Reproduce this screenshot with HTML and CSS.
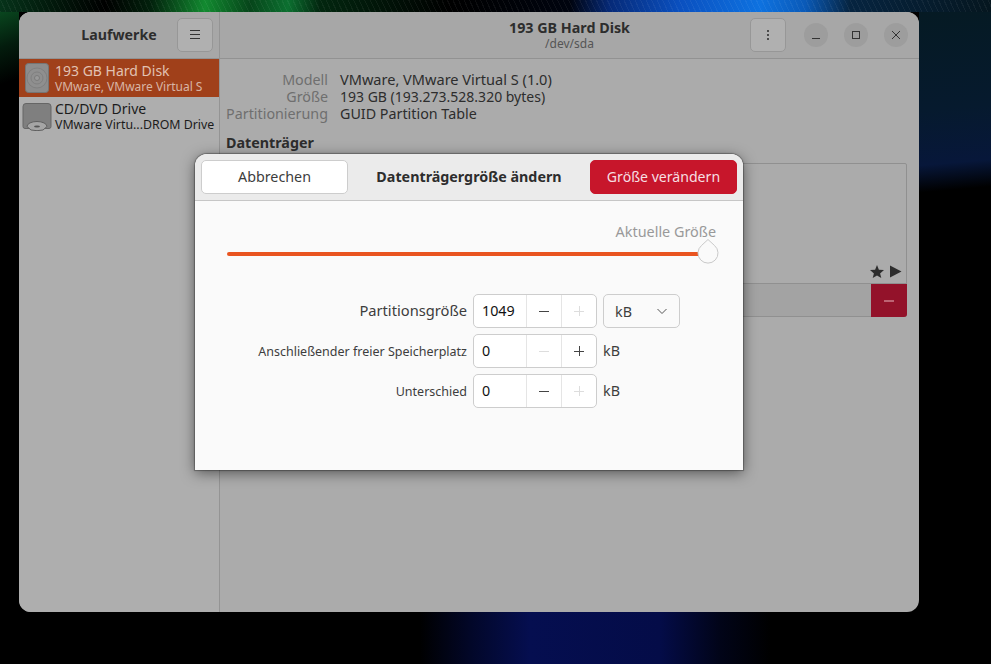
FILE: index.html
```html
<!DOCTYPE html>
<html lang="de">
<head>
    <meta charset="UTF-8">
    <title>Laufwerke</title>
    <link rel="stylesheet" href="styles.css">
</head>
<body>

<div class="window">

    <div class="sidebar">
        <div class="sidehead">
            <span></span>
            <b>Laufwerke</b>
            <button class="headbtn">
                <svg width="12" height="12" viewBox="0 0 12 12"><path d="M1 1.500h10M1 5.500h10M1 9.500h10" stroke="#333" fill="none"/></svg>
            </button>
        </div>

        <div class="drive selected">
            <svg class="driveicon" width="30" height="30" viewBox="0 0 30 30">
                <rect x="3.500" y="0.500" width="23" height="29" rx="3" fill="#8c8c8c" stroke="#757575"/>
                <circle cx="15" cy="15" r="10" fill="#8f8f8f" stroke="#808080"/>
                <circle cx="15" cy="15" r="6" fill="none" stroke="#808080"/>
                <circle cx="15" cy="15" r="2.500" fill="#999" stroke="#7b7b7b"/>
            </svg>
            <div>
                <p class="drivename">193 GB Hard Disk</p>
                <p class="drivesub">VMware, VMware Virtual S</p>
            </div>
        </div>

        <div class="drive">
            <svg class="driveicon" width="30" height="30" viewBox="0 0 30 30">
                <path d="M4 2.500h22a3 3 0 0 1 3 3v20a2 2 0 0 1-2 2h-24a2 2 0 0 1-2-2v-20a3 3 0 0 1 3-3z" fill="#7f7f7f" stroke="#666"/>
                <path d="M5 25.500a10 5 0 0 1 20 0l-4 3.500a10 3 0 0 1-12 0z" fill="#a5a5a5" stroke="#5f5f5f"/>
                <ellipse cx="15" cy="25.500" rx="3" ry="1" fill="#555"/>
            </svg>
            <div>
                <p class="drivename dark">CD/DVD Drive</p>
                <p class="drivesub dark wide">VMware Virtu...DROM Drive</p>
            </div>
        </div>
    </div>

    <div class="main">
        <div class="mainhead">
            <span></span>
            <div class="title">
                <b>193 GB Hard Disk</b>
                <small>/dev/sda</small>
            </div>
            <div class="controls">
                <button class="headbtn kebab">
                    <svg width="12" height="12" viewBox="0 0 12 12"><path d="M6 1v2M6 5v2M6 9v2" stroke="#333" stroke-width="1.600" fill="none"/></svg>
                </button>
                <span class="wbtn"><svg width="12" height="12" viewBox="0 0 12 12"><path d="M2 9.500h8" stroke="#333" fill="none"/></svg></span>
                <span class="wbtn"><svg width="12" height="12" viewBox="0 0 12 12"><rect x="2.500" y="2.500" width="7" height="7" stroke="#333" fill="none"/></svg></span>
                <span class="wbtn"><svg width="12" height="12" viewBox="0 0 12 12"><path d="M2 2l8 8M10 2l-8 8" stroke="#333" fill="none"/></svg></span>
            </div>
        </div>

        <div class="content">
            <div class="info">
                <span class="lbl">Modell</span><span class="model">VMware, VMware Virtual S (1.0)</span>
                <span class="lbl">Größe</span><span class="bytes">193 GB (193.273.528.320 bytes)</span>
                <span class="lbl">Partitionierung</span><span>GUID Partition Table</span>
            </div>
            <h2>Datenträger</h2>
            <div class="volumes">
                <div class="volmap">
                    <svg width="32" height="13" viewBox="0 0 32 13">
                        <path d="M7 0l1.900 4.700 5.100.4-3.900 3.300 1.200 4.600-4.300-2.600-4.300 2.600 1.200-4.600-3.900-3.300 5.100-.4z" fill="#2d2d2d"/>
                        <path d="M20 0.500l11.500 6-11.500 6z" fill="#2d2d2d"/>
                    </svg>
                </div>
                <div class="voltools">
                    <button class="delete"><svg width="10" height="2" viewBox="0 0 10 2"><path d="M0 1h10" stroke="#e8b4bc"/></svg></button>
                </div>
            </div>
        </div>
    </div>

    <div class="dialog">
        <div class="dialoghead">
            <button class="dbtn">Abbrechen</button>
            <b>Datenträgergröße ändern</b>
            <button class="dbtn red">Größe verändern</button>
        </div>
        <div class="dialogbody">
            <div class="slider">
                <span class="marker">Aktuelle Größe</span>
                <div class="track">
                    <svg class="thumb" width="24" height="28" viewBox="0 0 24 28">
                        <path d="M12 2.500l6.500 6a10 10 0 1 1-13 0z" fill="#fafafa" stroke="#c9c9c9"/>
                    </svg>
                </div>
            </div>

            <div class="form">
                <label class="big">Partitionsgröße</label>
                <div class="spin">
                    <span class="val">1049</span>
                    <span class="step"><svg width="12" height="12" viewBox="0 0 12 12"><path d="M1 6.500h10" stroke="#444"/></svg></span>
                    <span class="step"><svg width="12" height="12" viewBox="0 0 12 12"><path d="M1 6.500h10M6.500 1v10" stroke="#ddd"/></svg></span>
                </div>
                <div class="combo">
                    <span>kB</span>
                    <svg width="12" height="12" viewBox="0 0 12 12"><path d="M1.500 4l4.500 4.500 4.500-4.500" stroke="#555" fill="none"/></svg>
                </div>

                <label>Anschließender freier Speicherplatz</label>
                <div class="spin">
                    <span class="val">0</span>
                    <span class="step"><svg width="12" height="12" viewBox="0 0 12 12"><path d="M1 6.500h10" stroke="#ddd"/></svg></span>
                    <span class="step"><svg width="12" height="12" viewBox="0 0 12 12"><path d="M1 6.500h10M6.500 1v10" stroke="#444"/></svg></span>
                </div>
                <span class="unit">kB</span>

                <label>Unterschied</label>
                <div class="spin">
                    <span class="val">0</span>
                    <span class="step"><svg width="12" height="12" viewBox="0 0 12 12"><path d="M1 6.500h10" stroke="#444"/></svg></span>
                    <span class="step"><svg width="12" height="12" viewBox="0 0 12 12"><path d="M1 6.500h10M6.500 1v10" stroke="#ddd"/></svg></span>
                </div>
                <span class="unit">kB</span>
            </div>
        </div>
    </div>

</div>

</body>
</html>
```

FILE: styles.css
```css
html, body {
    height: 100%;
}

/* wallpaper: only the strips around the window can be seen */
body {
    margin: 0;
    padding: 12px 72px 52px 19px;
    box-sizing: border-box;
    overflow: hidden;
    font-family: "Noto Sans", sans-serif;
    font-size: 14.3px;
    color: #2d2d2d;
    background-color: #000;
    background-image:
        repeating-linear-gradient(65deg, rgba(255,255,255,0.05) 0 1px, rgba(0,0,0,0) 1px 5px),
        linear-gradient(to right, #06331a 0, #021a0c 50px, #000 105px, #02200c 150px, #128a30 205px, #06451a 250px, #0c7030 288px, #02260f 320px, #000 450px, #00040f 570px, #062a78 610px, #0a50c0 680px, #0e72e0 760px, #0a5ab8 805px, #062440 850px, #05161f 991px),
        linear-gradient(175deg, #051a22 0, #061a2e 110px, #07173a 165px, #000 192px),
        linear-gradient(160deg, #0b5424 0, #031c0d 45px, #000 80px),
        linear-gradient(to right, #000 420px, #020728 470px, #050e50 530px, #040c48 660px, #010418 720px, #000 770px);
    background-size: 100% 12px, 100% 12px, 72px 210px, 19px 90px, 100% 52px;
    background-position: 0 0, 0 0, 100% 0, 0 0, 0 100%;
    background-repeat: no-repeat;
}

p {
    margin: 0;
}

button {
    font: inherit;
    padding: 0;
}

.window {
    position: relative;
    display: grid;
    grid-template-columns: 201px 1fr;
    height: 600px;
    border-radius: 12px;
    overflow: hidden;
    background: #ababab;
}

/* sidebar */
.sidebar {
    background: #aeaeae;
    border-right: 1px solid #949494;
}

.sidehead {
    display: grid;
    grid-template-columns: 36px 1fr 36px;
    align-items: center;
    height: 46px;
    padding: 0 6px;
    border-bottom: 1px solid #929292;
    background: #a7a7a7;
    text-align: center;
}

.sidehead b {
    padding-bottom: 2px;
    font-size: 14.2px;
}

.headbtn {
    display: flex;
    align-items: center;
    justify-content: center;
    width: 36px;
    height: 34px;
    border: 1px solid #979797;
    border-radius: 5px;
    background: #b0b0b0;
}

.drive {
    display: flex;
    align-items: center;
    gap: 3px;
    height: 38px;
    padding-left: 3px;
    overflow: hidden;
    white-space: nowrap;
}

.selected {
    background: #a0401a;
}

.driveicon {
    flex: none;
}

.drivename {
    font-size: 14px;
    line-height: 17px;
    color: #e2c2b3;
}

.drivesub {
    font-size: 12px;
    line-height: 15px;
    color: #d8b5a5;
}

.dark {
    color: #1c1c1c;
}

.wide {
    font-size: 12.35px;
}

/* main */
.mainhead {
    display: grid;
    grid-template-columns: 1fr auto 1fr;
    align-items: center;
    height: 46px;
    padding: 0 11px;
    border-bottom: 1px solid #929292;
    background: #a7a7a7;
}

.title {
    display: flex;
    flex-direction: column;
    align-items: center;
}

.title b {
    margin-top: 1px;
    line-height: 16px;
}

.title small {
    font-size: 12px;
    line-height: 15px;
    color: #555;
}

.controls {
    display: flex;
    justify-content: flex-end;
    align-items: center;
    gap: 16px;
}

.kebab {
    margin-right: 2px;
}

.wbtn {
    display: flex;
    align-items: center;
    justify-content: center;
    width: 24px;
    height: 24px;
    border-radius: 50%;
    background: #9d9d9d;
}

.content {
    padding: 12px 12px 0 6px;
}

.info {
    display: grid;
    grid-template-columns: 102px 1fr;
    column-gap: 12px;
    line-height: 17px;
}

.lbl {
    text-align: right;
    color: #6f6f6f;
}

.model {
    font-size: 14.55px;
}

.bytes {
    font-size: 14px;
}

h2 {
    margin: 12px 0 12px;
    font-size: 14.3px;
    line-height: 17px;
}

.volumes {
    border: 1px solid #909090;
    border-radius: 2px;
}

.volmap {
    display: flex;
    justify-content: flex-end;
    align-items: flex-end;
    height: 119px;
    padding: 0 4px 5px 0;
    box-sizing: border-box;
}

.voltools {
    display: flex;
    justify-content: flex-end;
    height: 32px;
    border-top: 1px solid #909090;
    background: #a3a3a3;
}

.delete {
    display: flex;
    align-items: center;
    justify-content: center;
    width: 36px;
    height: 33px;
    margin-right: -1px;
    border: none;
    border-radius: 0 0 3px 0;
    background: #93122a;
}

/* dialog */
.dialog {
    position: absolute;
    left: 176px;
    top: 142px;
    width: 548px;
    height: 316px;
    border-radius: 12px 12px 0 0;
    overflow: hidden;
    background: #fafafa;
    box-shadow: 0 0 1px 1px rgba(0, 0, 0, 0.3), 0 3px 14px rgba(0, 0, 0, 0.5);
}

.dialoghead {
    display: flex;
    justify-content: space-between;
    align-items: center;
    height: 46px;
    padding: 0 6px;
    border-bottom: 1px solid #c6c6c6;
    background: #ebebeb;
}

.dialoghead b {
    padding-bottom: 2px;
}

.dbtn {
    width: 147px;
    height: 34px;
    padding-bottom: 2px;
    border: 1px solid #cdcdcd;
    border-radius: 5px;
    background: #fff;
    color: #3d3d3d;
}

.red {
    border-color: #c7162b;
    background: #c7162b;
    color: #f6dfe2;
    font-size: 14.1px;
}

.dialogbody {
    padding: 22px 0 0;
}

.slider {
    margin: 0 27px 0 32px;
}

.marker {
    display: block;
    text-align: right;
    line-height: 17px;
    font-size: 14.4px;
    color: #999;
}

.track {
    position: relative;
    height: 4px;
    margin-top: 12px;
    margin-right: 8px;
    background: #e95420;
    border-radius: 2px;
}

.thumb {
    position: absolute;
    right: -12px;
    top: -15px;
}

.form {
    display: grid;
    grid-template-columns: 272px 124px 77px;
    column-gap: 6px;
    row-gap: 6px;
    align-items: center;
    margin-top: 38px;
    color: #3d3d3d;
}

.form label {
    text-align: right;
    font-size: 12.5px;
}

.form label.big {
    padding-bottom: 2px;
    font-size: 14.7px;
}

.unit {
    padding-bottom: 2px;
}

.spin {
    display: flex;
    align-items: stretch;
    height: 34px;
    box-sizing: border-box;
    border: 1px solid #cdcdcd;
    border-radius: 5px;
    background: #fff;
}

.val {
    flex: 1;
    padding-left: 8px;
    line-height: 32px;
    color: #111;
}

.step {
    display: flex;
    align-items: center;
    justify-content: center;
    width: 35px;
    box-sizing: border-box;
    border-left: 1px solid #e5e5e5;
}

.combo {
    display: flex;
    align-items: center;
    justify-content: space-between;
    height: 34px;
    box-sizing: border-box;
    padding: 0 11px;
    border: 1px solid #cdcdcd;
    border-radius: 5px;
}
```
